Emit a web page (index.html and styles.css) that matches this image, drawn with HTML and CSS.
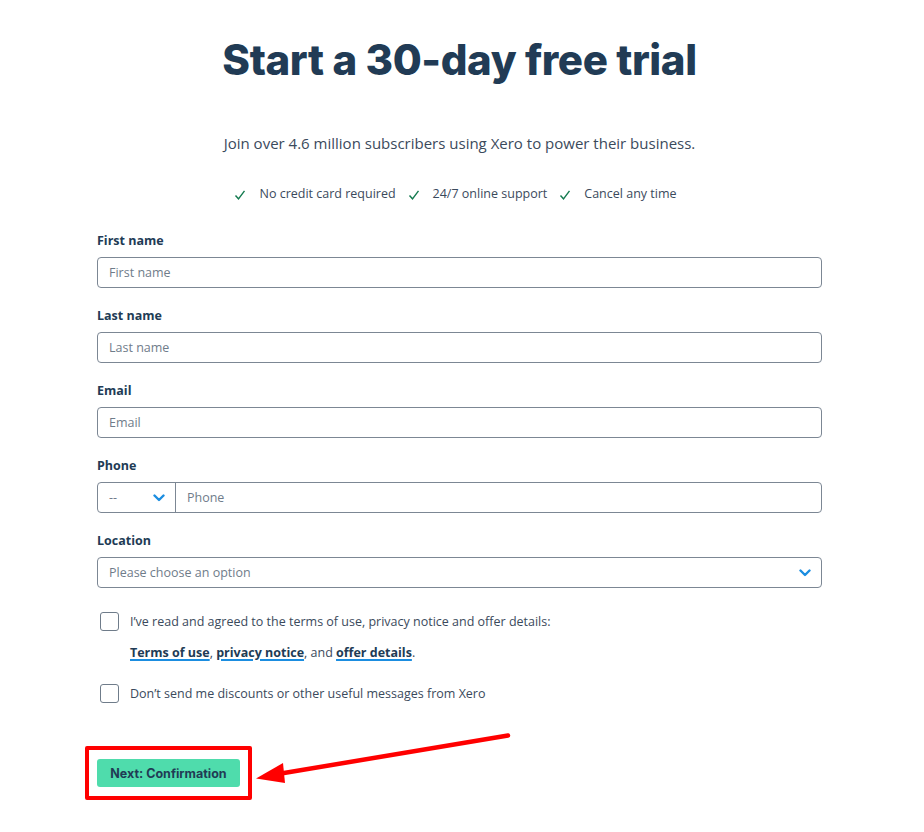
FILE: index.html
```html
<!DOCTYPE html>
<html lang="en">
<head>
<meta charset="utf-8">
<title>Start a 30-day free trial</title>
<link rel="stylesheet" href="styles.css">
</head>
<body>
<main class="page">
  <h1 class="title">Start a 30-day free trial</h1>
  <p class="subtitle">Join over 4.6 million subscribers using Xero to power their business.</p>
  <ul class="perks">
    <li><svg class="tick" viewBox="0 0 12 12"><path d="M1.5 6.5 L4.5 9.8 L10.5 1.8" /></svg>No credit card required</li>
    <li><svg class="tick" viewBox="0 0 12 12"><path d="M1.5 6.5 L4.5 9.8 L10.5 1.8" /></svg>24/7 online support</li>
    <li><svg class="tick" viewBox="0 0 12 12"><path d="M1.5 6.5 L4.5 9.8 L10.5 1.8" /></svg>Cancel any time</li>
  </ul>

  <form class="form">
    <div class="field">
      <label class="label">First name</label>
      <div class="input"><span class="ph">First name</span></div>
    </div>
    <div class="field">
      <label class="label">Last name</label>
      <div class="input"><span class="ph">Last name</span></div>
    </div>
    <div class="field">
      <label class="label">Email</label>
      <div class="input"><span class="ph">Email</span></div>
    </div>
    <div class="field">
      <label class="label">Phone</label>
      <div class="input phone">
        <div class="code"><span class="ph">--</span><svg class="chev" viewBox="0 0 12 8"><path d="M1.5 1.5 L6 6 L10.5 1.5" /></svg></div>
        <span class="ph phone-ph">Phone</span>
      </div>
    </div>
    <div class="field">
      <label class="label">Location</label>
      <div class="input select"><span class="ph">Please choose an option</span><svg class="chev" viewBox="0 0 12 8"><path d="M1.5 1.5 L6 6 L10.5 1.5" /></svg></div>
    </div>

    <div class="check-row">
      <span class="box"></span>
      <div class="check-text">
        <p>I’ve read and agreed to the terms of use, privacy notice and offer details:</p>
        <p class="links"><a>Terms of use</a>, <a>privacy notice</a>, and <a>offer details</a>.</p>
      </div>
    </div>
    <div class="check-row second">
      <span class="box"></span>
      <div class="check-text"><p>Don’t send me discounts or other useful messages from Xero</p></div>
    </div>

    <div class="actions">
      <div class="highlight">
        <button type="button" class="btn">Next: Confirmation</button>
      </div>
    </div>
  </form>
</main>
<svg class="arrow" width="924" height="832" viewBox="0 0 924 832">
  <line x1="508" y1="735.5" x2="272" y2="775" />
  <polygon points="256,778.5 283,763 285,783" />
</svg>
</body>
</html>
```
FILE: styles.css
```css
html, body {
  margin: 0;
  padding: 0;
  background: #ffffff;
}
body {
  font-family: "Open Sans", "Noto Sans", Arial, sans-serif;
  color: #213b55;
  position: relative;
  min-height: 832px;
}
.page {
  width: 725px;
  margin-left: 97px;
  padding-top: 28px;
}
.title {
  margin: 0;
  text-align: center;
  font-family: Inter, "Noto Sans", sans-serif;
  font-weight: 800;
  font-size: 42px;
  line-height: 64px;
  letter-spacing: -0.4px;
  color: #213b55;
}
.subtitle {
  margin: 40px 0 0;
  text-align: center;
  font-size: 15px;
  line-height: 22px;
  color: #3b4a5c;
}
.perks {
  list-style: none;
  margin: 31px 0 0;
  padding: 0;
  display: flex;
  justify-content: center;
  gap: 12px;
  font-size: 12.5px;
  line-height: 18px;
  color: #3b4a5c;
  padding-right: 8px;
}
.perks li {
  display: flex;
  align-items: center;
}
.tick {
  width: 12px;
  height: 12px;
  margin-right: 13px;
  margin-top: 2px;
}
.tick path {
  fill: none;
  stroke: #137a4f;
  stroke-width: 1.4;
}
.form {
  margin-top: 29px;
}
.field {
  margin-bottom: 19px;
}
.label {
  display: block;
  font-size: 12.5px;
  font-weight: 700;
  line-height: 18px;
  color: #213b55;
  margin-bottom: 7px;
}
.input {
  box-sizing: border-box;
  height: 31px;
  border: 1px solid #7c8794;
  border-radius: 4px;
  display: flex;
  align-items: center;
  padding: 0 11px;
}
.ph {
  font-size: 12.5px;
  color: #6f7c8a;
}
.phone {
  padding: 0;
}
.code {
  width: 78px;
  height: 100%;
  box-sizing: border-box;
  border-right: 1px solid #7c8794;
  display: flex;
  align-items: center;
  justify-content: space-between;
  padding: 0 10px 0 11px;
}
.phone-ph {
  padding-left: 11px;
}
.select {
  justify-content: space-between;
  padding-right: 10px;
}
.chev {
  width: 12px;
  height: 8px;
}
.chev path {
  fill: none;
  stroke: #1b8de0;
  stroke-width: 2.4;
  stroke-linecap: round;
  stroke-linejoin: round;
}
.check-row {
  display: flex;
  align-items: flex-start;
  margin-top: 24px;
  padding-left: 3px;
}
.check-row.second {
  margin-top: 22px;
}
.box {
  flex: none;
  width: 17px;
  height: 17px;
  border: 1px solid #6f7c8a;
  border-radius: 3px;
  margin-right: 11px;
}
.check-text p {
  margin: 0;
  font-size: 12.5px;
  line-height: 19px;
  color: #3b4a5c;
}
.check-text .links {
  margin-top: 12px;
}
.links a {
  font-weight: 700;
  color: #213b55;
  text-decoration: underline;
  text-decoration-color: #1b8de0;
  text-decoration-thickness: 2px;
  text-underline-offset: 2px;
}
.actions {
  margin-top: 56px;
}
.highlight {
  position: relative;
  display: inline-block;
}
.highlight::before {
  content: "";
  position: absolute;
  left: -12px;
  top: -13px;
  right: -12px;
  bottom: -13px;
  border: 4px solid #ff0000;
  border-radius: 2px;
}
.btn {
  display: block;
  width: 143px;
  height: 28px;
  border: none;
  border-radius: 3px;
  background: #4fdcac;
  color: #213b55;
  font-family: Inter, "Noto Sans", sans-serif;
  font-weight: 700;
  font-size: 12.5px;
  padding: 0;
}
.arrow {
  position: absolute;
  left: 0;
  top: 0;
  pointer-events: none;
}
.arrow line {
  stroke: #ff0000;
  stroke-width: 4.5;
  stroke-linecap: round;
}
.arrow polygon {
  fill: #ff0000;
}
```
